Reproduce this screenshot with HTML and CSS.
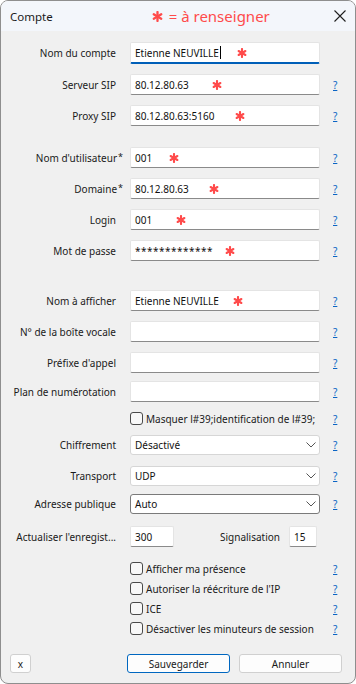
FILE: index.html
```html
<!DOCTYPE html>
<html lang="fr">
<head>
  <meta charset="UTF-8" />
  <meta name="viewport" content="width=device-width, initial-scale=1.0"/>
  <title>Compte</title>
  <link rel="stylesheet" href="styles.css">
</head>
<body>
  <svg class="defs" width="0" height="0">
    <symbol id="req" viewBox="0 0 10 10">
      <g stroke="#ff4b4b" stroke-width="2.1" stroke-linecap="round">
        <path d="M5 1 V9"/>
        <path d="M1.6 3 L8.4 7"/>
        <path d="M8.4 3 L1.6 7"/>
      </g>
    </symbol>
  </svg>

  <div class="window">
    <div class="titlebar">
      <span class="title">Compte</span>
      <span class="legend"><svg class="legend-star"><use href="#req"/></svg>= à renseigner</span>
      <svg class="close" width="12" height="12" viewBox="0 0 12 12">
        <path d="M0.5 0.5 L11.5 11.5 M11.5 0.5 L0.5 11.5" stroke="#1f1f1f" stroke-width="1.1" fill="none"/>
      </svg>
    </div>

    <div class="content">
      <div class="row first">
        <span class="lbl">Nom du compte</span>
        <div class="field focused">Etienne NEUVILLE<span class="caret"></span><svg class="req req-acct"><use href="#req"/></svg></div>
      </div>
      <div class="row">
        <span class="lbl">Serveur SIP</span>
        <div class="field">80.12.80.63<svg class="req req-sip"><use href="#req"/></svg></div>
        <a class="help">?</a>
      </div>
      <div class="row">
        <span class="lbl">Proxy SIP</span>
        <div class="field">80.12.80.63:5160<svg class="req req-proxy"><use href="#req"/></svg></div>
        <a class="help">?</a>
      </div>

      <div class="row mt-21">
        <span class="lbl">Nom d'utilisateur<span class="star">*</span></span>
        <div class="field">001<svg class="req req-user"><use href="#req"/></svg></div>
        <a class="help">?</a>
      </div>
      <div class="row">
        <span class="lbl">Domaine<span class="star">*</span></span>
        <div class="field">80.12.80.63<svg class="req req-domain"><use href="#req"/></svg></div>
        <a class="help">?</a>
      </div>
      <div class="row">
        <span class="lbl">Login</span>
        <div class="field">001<svg class="req req-login"><use href="#req"/></svg></div>
        <a class="help">?</a>
      </div>
      <div class="row">
        <span class="lbl">Mot de passe</span>
        <div class="field pass">*************<svg class="req req-pass"><use href="#req"/></svg></div>
        <a class="help">?</a>
      </div>

      <div class="row mt-29">
        <span class="lbl">Nom à afficher</span>
        <div class="field">Etienne NEUVILLE<svg class="req req-display"><use href="#req"/></svg></div>
        <a class="help">?</a>
      </div>
      <div class="row">
        <span class="lbl">N° de la boîte vocale</span>
        <div class="field"></div>
        <a class="help">?</a>
      </div>
      <div class="row">
        <span class="lbl">Préfixe d'appel</span>
        <div class="field"></div>
        <a class="help">?</a>
      </div>
      <div class="row mt-8">
        <span class="lbl">Plan de numérotation</span>
        <div class="field"></div>
        <a class="help">?</a>
      </div>

      <div class="row check-row">
        <span class="box"></span>
        <span class="check-text">Masquer l#39;identification de l#39;</span>
        <a class="help">?</a>
      </div>

      <div class="row select-row">
        <span class="lbl">Chiffrement</span>
        <div class="select">Désactivé<svg class="chev" width="10" height="6" viewBox="0 0 10 6"><path d="M0.5 0.5 L5 5 L9.5 0.5" stroke="#555" fill="none"/></svg></div>
        <a class="help">?</a>
      </div>
      <div class="row select-row mt-11">
        <span class="lbl">Transport</span>
        <div class="select">UDP<svg class="chev" width="10" height="6" viewBox="0 0 10 6"><path d="M0.5 0.5 L5 5 L9.5 0.5" stroke="#555" fill="none"/></svg></div>
        <a class="help">?</a>
      </div>
      <div class="row select-row mt-8">
        <span class="lbl">Adresse publique</span>
        <div class="select dark">Auto<svg class="chev" width="10" height="6" viewBox="0 0 10 6"><path d="M0.5 0.5 L5 5 L9.5 0.5" stroke="#555" fill="none"/></svg></div>
        <a class="help">?</a>
      </div>

      <div class="row mt-12">
        <span class="lbl">Actualiser l'enregist...</span>
        <div class="field small">300</div>
        <span class="sig-lbl">Signalisation</span>
        <div class="field tiny">15</div>
      </div>

      <div class="row check-row mt-15">
        <span class="box"></span>
        <span class="check-text">Afficher ma présence</span>
        <a class="help">?</a>
      </div>
      <div class="row check-row mt-7">
        <span class="box"></span>
        <span class="check-text">Autoriser la réécriture de l'IP</span>
        <a class="help">?</a>
      </div>
      <div class="row check-row mt-7">
        <span class="box"></span>
        <span class="check-text">ICE</span>
        <a class="help">?</a>
      </div>
      <div class="row check-row mt-7">
        <span class="box"></span>
        <span class="check-text">Désactiver les minuteurs de session</span>
        <a class="help">?</a>
      </div>

      <div class="buttons">
        <button class="btn btn-x">x</button>
        <button class="btn btn-save">Sauvegarder</button>
        <button class="btn btn-cancel">Annuler</button>
      </div>
    </div>
  </div>
</body>
</html>
```

FILE: styles.css
```css
* {
  box-sizing: border-box;
}

body {
  margin: 0;
  background-color: #fff;
  font-family: "Noto Sans", "Liberation Sans", Arial, sans-serif;
  font-size: 10px;
  color: #1a1a1a;
}

.defs {
  position: absolute;
}

.window {
  width: 356px;
  height: 684px;
  border: 1px solid #8e8e8e;
  border-radius: 8px;
  background-color: #f0f0f0;
  overflow: hidden;
  display: flex;
  flex-direction: column;
}

.titlebar {
  height: 30px;
  flex-shrink: 0;
  background-color: #f3f6fb;
  display: flex;
  align-items: center;
  padding-left: 9px;
}

.title {
  font-size: 11.5px;
  color: #1a1a1a;
}

.legend {
  margin-left: 99px;
  color: #ff4b4b;
  font-size: 15px;
  display: flex;
  align-items: center;
  white-space: nowrap;
}

.legend-star {
  width: 11px;
  height: 11px;
  margin-right: 6px;
}

.close {
  margin-left: auto;
  margin-right: 9px;
}

.content {
  flex: 1;
  padding-top: 11px;
  display: flex;
  flex-direction: column;
}

.row {
  display: flex;
  align-items: center;
  height: 21px;
  margin-top: 10px;
  padding-right: 14px;
}

.row.first {
  margin-top: 0;
  height: 22px;
}

.mt-7 { margin-top: 7px; }
.mt-8 { margin-top: 8px; }
.mt-11 { margin-top: 11px; }
.mt-12 { margin-top: 12px; }
.mt-15 { margin-top: 15px; }
.mt-21 { margin-top: 21px; }
.mt-29 { margin-top: 29px; }

.lbl {
  width: 115px;
  flex-shrink: 0;
  text-align: right;
  white-space: nowrap;
}

.star {
  font-size: 9px;
  margin-left: 1px;
  margin-right: -7px;
  vertical-align: 2px;
}

.field {
  position: relative;
  margin-left: 14px;
  width: 190px;
  height: 21px;
  flex-shrink: 0;
  background-color: #fff;
  border: 1px solid #e4e4e4;
  border-bottom-color: #8a8a8a;
  border-radius: 2px;
  padding: 0 4px;
  display: flex;
  align-items: center;
  color: #111;
}

.field.focused {
  height: 22px;
  border-bottom: 2px solid #005fb8;
}

.field.pass {
  letter-spacing: 0.5px;
}

.field.small {
  width: 44px;
}

.field.tiny {
  margin-left: 9px;
  width: 28px;
}

.caret {
  width: 1px;
  height: 13px;
  background-color: #000;
  margin-left: 1px;
}

.req {
  position: absolute;
  top: 50%;
  width: 10px;
  height: 10px;
  margin-top: -5px;
}

.req-acct { left: 106px; }
.req-sip { left: 81px; }
.req-proxy { left: 104px; }
.req-user { left: 38px; }
.req-domain { left: 78px; }
.req-login { left: 45px; }
.req-pass { left: 94px; }
.req-display { left: 102px; }

.help {
  margin-left: auto;
  width: 8px;
  color: #0a64c4;
  text-decoration: underline;
  cursor: pointer;
}

.check-row {
  height: 13px;
  padding-left: 129px;
}

.box {
  width: 13px;
  height: 13px;
  flex-shrink: 0;
  border: 1px solid #4a4a4a;
  border-radius: 3px;
  background-color: #f8f8f8;
}

.check-text {
  margin-left: 3px;
  white-space: nowrap;
}

.select-row {
  height: 20px;
}

.select {
  margin-left: 14px;
  width: 190px;
  height: 20px;
  flex-shrink: 0;
  background-color: #fff;
  border: 1px solid #d6d6d6;
  border-radius: 3px;
  padding-left: 4px;
  display: flex;
  align-items: center;
  color: #111;
}

.select.dark {
  border-color: #7a7a7a;
}

.chev {
  margin-left: auto;
  margin-right: 3px;
}

.sig-lbl {
  margin-left: 46px;
  white-space: nowrap;
}

.buttons {
  display: flex;
  align-items: center;
  margin-top: 19px;
  padding-left: 9px;
}

.btn {
  height: 19px;
  padding: 0;
  font-family: inherit;
  font-size: 10px;
  color: #1a1a1a;
  background-color: #fdfdfd;
  border: 1px solid #d0d0d0;
  border-radius: 3px;
}

.btn-x {
  width: 21px;
}

.btn-save {
  margin-left: 96px;
  width: 103px;
  border-color: #0067c0;
}

.btn-cancel {
  margin-left: 9px;
  width: 103px;
}
```
